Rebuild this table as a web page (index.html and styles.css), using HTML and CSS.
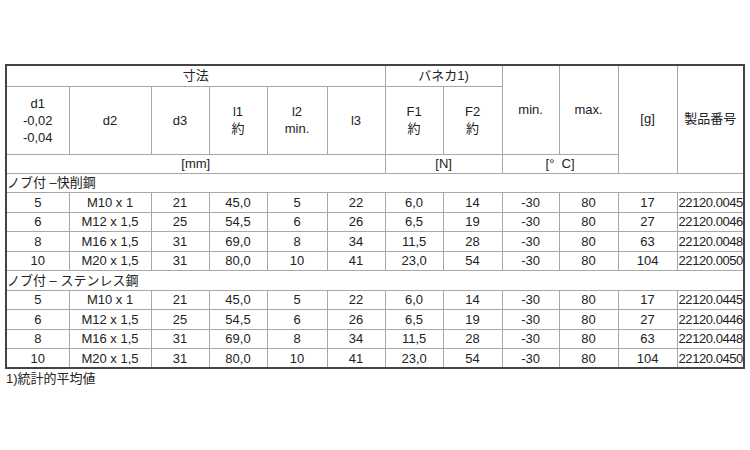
FILE: index.html
```html
<!DOCTYPE html>
<html lang="ja">
<head>
<meta charset="utf-8">
<link rel="stylesheet" href="styles.css">
</head>
<body>
<div class="page">
<table class="spec">
<colgroup>
<col class="c63"><col class="c82"><col class="c58"><col class="c58"><col class="c60"><col class="c58"><col class="c58"><col class="c59"><col class="c57"><col class="c59"><col class="c59"><col class="c67">
</colgroup>
<thead>
<tr class="h1">
<th colspan="6">寸法</th>
<th colspan="2">バネカ1)</th>
<th rowspan="2">min.</th>
<th rowspan="2">max.</th>
<th rowspan="3">[g]</th>
<th rowspan="3">製品番号</th>
</tr>
<tr class="h2">
<th>d1<br>-0,02<br>-0,04</th>
<th>d2</th>
<th>d3</th>
<th>l1<br>約</th>
<th>l2<br>min.</th>
<th>l3</th>
<th>F1<br>約</th>
<th>F2<br>約</th>
</tr>
<tr class="h3">
<th colspan="6">[mm]</th>
<th colspan="2">[N]</th>
<th colspan="2">[°&nbsp; C]</th>
</tr>
</thead>
<tbody>
<tr class="sec"><td colspan="12">ノブ付 –快削鋼</td></tr>
<tr><td>5</td><td>M10 x 1</td><td>21</td><td>45,0</td><td>5</td><td>22</td><td>6,0</td><td>14</td><td>-30</td><td>80</td><td>17</td><td class="no">22120.0045</td></tr>
<tr><td>6</td><td>M12 x 1,5</td><td>25</td><td>54,5</td><td>6</td><td>26</td><td>6,5</td><td>19</td><td>-30</td><td>80</td><td>27</td><td class="no">22120.0046</td></tr>
<tr><td>8</td><td>M16 x 1,5</td><td>31</td><td>69,0</td><td>8</td><td>34</td><td>11,5</td><td>28</td><td>-30</td><td>80</td><td>63</td><td class="no">22120.0048</td></tr>
<tr><td>10</td><td>M20 x 1,5</td><td>31</td><td>80,0</td><td>10</td><td>41</td><td>23,0</td><td>54</td><td>-30</td><td>80</td><td>104</td><td class="no">22120.0050</td></tr>
<tr class="sec"><td colspan="12">ノブ付 – ステンレス鋼</td></tr>
<tr><td>5</td><td>M10 x 1</td><td>21</td><td>45,0</td><td>5</td><td>22</td><td>6,0</td><td>14</td><td>-30</td><td>80</td><td>17</td><td class="no">22120.0445</td></tr>
<tr><td>6</td><td>M12 x 1,5</td><td>25</td><td>54,5</td><td>6</td><td>26</td><td>6,5</td><td>19</td><td>-30</td><td>80</td><td>27</td><td class="no">22120.0446</td></tr>
<tr><td>8</td><td>M16 x 1,5</td><td>31</td><td>69,0</td><td>8</td><td>34</td><td>11,5</td><td>28</td><td>-30</td><td>80</td><td>63</td><td class="no">22120.0448</td></tr>
<tr><td>10</td><td>M20 x 1,5</td><td>31</td><td>80,0</td><td>10</td><td>41</td><td>23,0</td><td>54</td><td>-30</td><td>80</td><td>104</td><td class="no">22120.0450</td></tr>
</tbody>
</table>
<p class="note">1)統計的平均値</p>
</div>
</body>
</html>
```
FILE: styles.css
```css
html, body {
  margin: 0;
  padding: 0;
  background: #ffffff;
}
.page {
  padding: 64px 0 0 5px;
  font-family: "Liberation Sans", "Noto Sans CJK JP", sans-serif;
  font-size: 13px;
  color: #222;
}
.c63 { width: 63px; }
.c82 { width: 82px; }
.c58 { width: 58px; }
.c60 { width: 60px; }
.c59 { width: 59px; }
.c57 { width: 57px; }
.c67 { width: 67px; }
.spec {
  border-collapse: collapse;
  table-layout: fixed;
  width: 738px;
  border: 2px solid #444;
}
.spec th, .spec td {
  border: 1px solid #a8a8a8;
  padding: 0 1px;
  text-align: center;
  vertical-align: middle;
  font-weight: normal;
  line-height: 17px;
  white-space: nowrap;
  overflow: hidden;
}
.h1 { height: 21px; }
.h2 { height: 68px; }
.h3 { height: 19px; }
.spec th { line-height: 16px; }
.h2 th { line-height: 17px; }
.spec tbody tr { height: 19.5px; }
.spec td.no {
  text-align: left;
  padding-left: 1px;
  letter-spacing: -0.45px;
}
.spec tr.sec td {
  text-align: left;
  padding-left: 0;
}
.note {
  margin: 2px 0 0 1px;
  line-height: 16px;
}
```
